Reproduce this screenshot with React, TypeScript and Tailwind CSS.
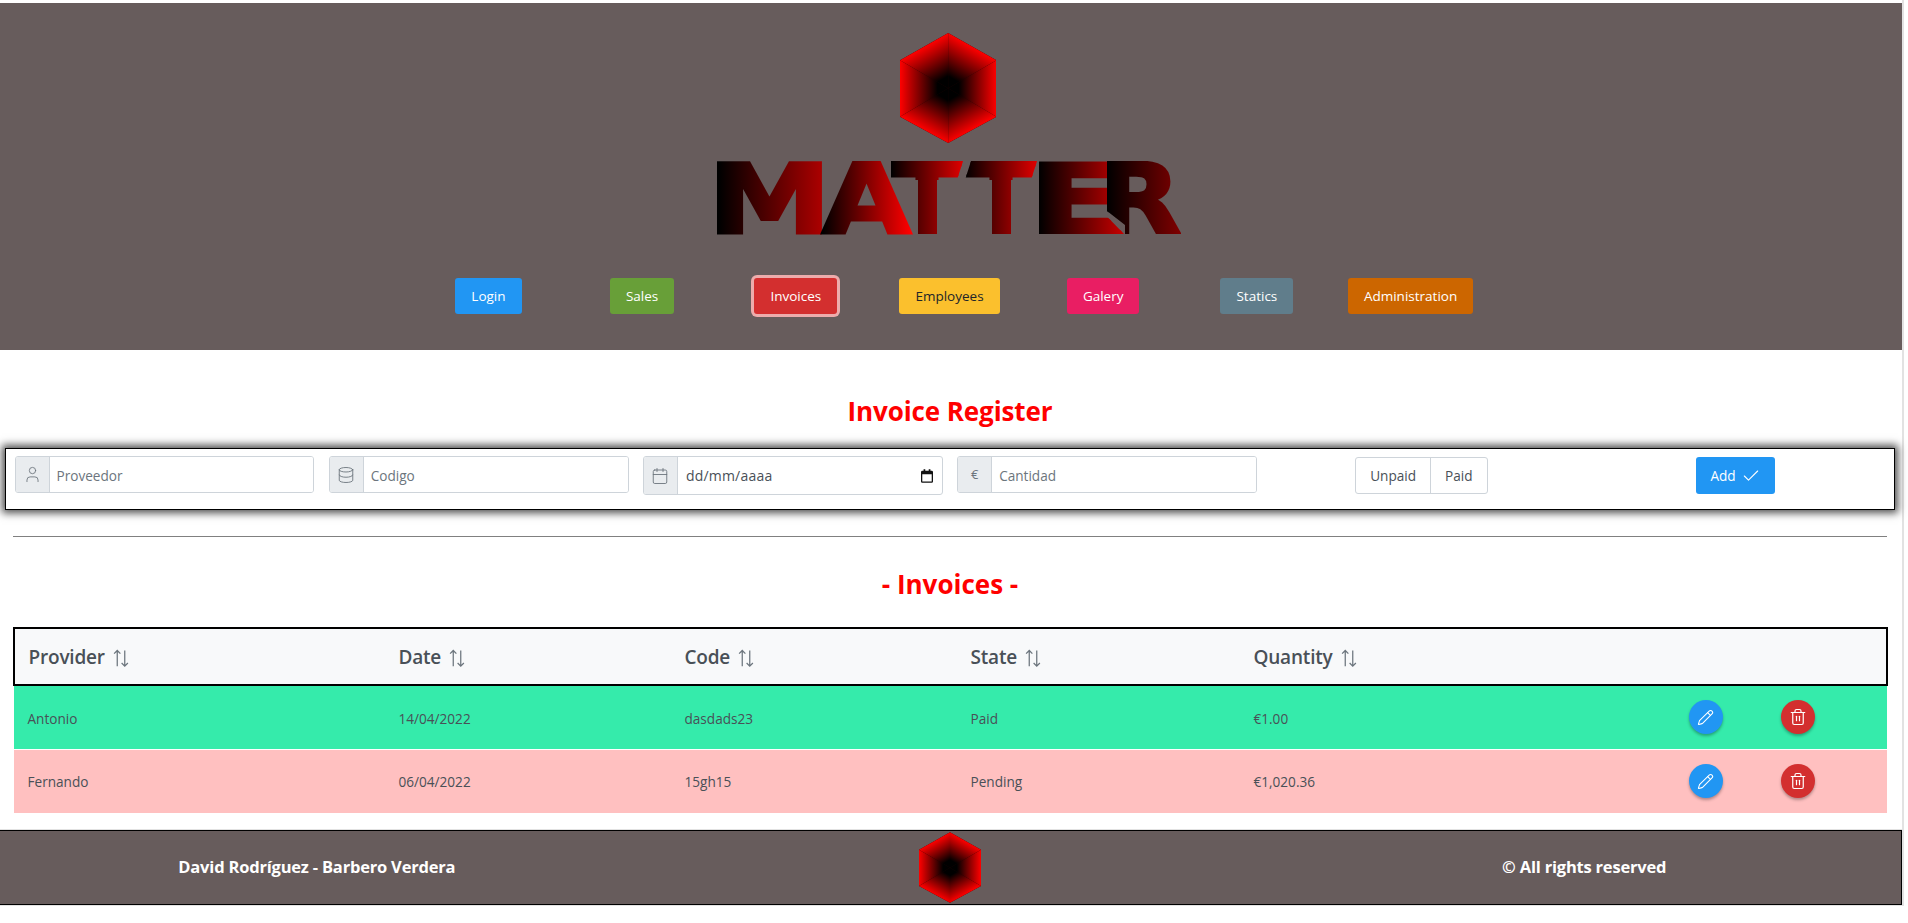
import React from "react";
import { Check, Database, Pencil, Trash2, User, Calendar } from "lucide-react";

const hexFaces = [
  { id: "a", pts: "48.2,0 96.4,27.3 48.2,55.3", to: [72.3, 13.6] },
  { id: "b", pts: "96.4,27.3 96.4,83.7 48.2,55.3", to: [96.4, 55.3] },
  { id: "c", pts: "96.4,83.7 48.2,110 48.2,55.3", to: [72.3, 97] },
  { id: "d", pts: "48.2,110 0,83.7 48.2,55.3", to: [24.1, 97] },
  { id: "e", pts: "0,83.7 0,27.3 48.2,55.3", to: [0, 55.3] },
  { id: "f", pts: "0,27.3 48.2,0 48.2,55.3", to: [24.1, 13.6] },
];

function Hex({ prefix, className }: { prefix: string; className: string }) {
  return (
    <svg viewBox="0 0 96.4 110" className={className} aria-hidden="true">
      <defs>
        {hexFaces.map((f) => (
          <linearGradient key={f.id} id={prefix + f.id} gradientUnits="userSpaceOnUse" x1="48.2" y1="55.3" x2={f.to[0]} y2={f.to[1]}>
            <stop offset="0.22" stopColor="#000" />
            <stop offset="1" stopColor="#f00" />
          </linearGradient>
        ))}
      </defs>
      <polygon points="48.2,0 96.4,27.3 96.4,83.7 48.2,110 0,83.7 0,27.3" fill="#200" />
      {hexFaces.map((f) => (
        <polygon key={f.id} points={f.pts} fill={`url(#${prefix + f.id})`} />
      ))}
    </svg>
  );
}

const letters = [
  { ch: "M", x: -11.4, w: 124, gx: 0, gw: 101, end: "#a80000", clip: "" },
  { ch: "A", x: 103, w: 89, gx: 104, gw: 88, end: "#ff0000", clip: "" },
  { ch: "T", x: 172, w: 72, gx: 172, gw: 72, end: "#e00000", clip: "url(#t1)" },
  { ch: "T", x: 246, w: 72, gx: 246, gw: 72, end: "#e00000", clip: "url(#t2)" },
  { ch: "E", x: 305, w: 110, gx: 320, gw: 85, end: "#c80000", clip: "url(#ec)" },
  { ch: "R", x: 378, w: 84, gx: 388, gw: 74, end: "#800000", clip: "url(#rc)" },
];

function Wordmark() {
  return (
    <div className="flex w-[462px] h-[73px]">
      <svg viewBox="-30 -30 522 133" className="block shrink-0 w-[522px] h-[133px] -m-[30px]" role="img" aria-label="MATTER">
        <defs>
          {letters.map((l, i) => (
            <linearGradient key={i} id={"lg" + i} gradientUnits="userSpaceOnUse" x1={l.gx} y1="0" x2={l.gx + l.gw} y2="0">
              <stop offset="0" stopColor="#000" />
              <stop offset="1" stopColor={l.end} />
            </linearGradient>
          ))}
          <clipPath id="t1">
            <polygon points="172,0 244,0 238,19 218,19 218,73 199,73 199,19 172,19" />
          </clipPath>
          <clipPath id="t2">
            <polygon points="252,0 318,0 312,19 292,19 292,73 273,73 273,19 246,19" />
          </clipPath>
          <clipPath id="ec">
            <polygon points="320,0 388,0 388,55.6 405,73 320,73" />
          </clipPath>
          <clipPath id="rc">
            <polygon points="388,0 462,0 462,73 406,73 406,64 388,50" />
          </clipPath>
        </defs>
        {letters.map((l, i) => (
          <text
            key={i}
            x={l.x}
            y="71.5"
            textLength={l.w}
            lengthAdjust="spacingAndGlyphs"
            clipPath={l.clip || undefined}
            fill={`url(#lg${i})`}
            stroke={`url(#lg${i})`}
            strokeWidth="3"
            style={{ fontFamily: '"DejaVu Sans", sans-serif', fontWeight: 700, fontSize: 96 }}
          >
            {l.ch}
          </text>
        ))}
      </svg>
    </div>
  );
}

function SortAlt() {
  return (
    <svg viewBox="0 0 16 16" className="w-[20px] h-[20px] text-[#6c757d]" fill="none" stroke="currentColor" strokeWidth="1" aria-hidden="true">
      <path d="M5 14.5V2M2.5 4.5 5 2l2.5 2.5M11 2v12.5M8.5 12 11 14.5l2.5-2.5" />
    </svg>
  );
}

const navs = [
  { t: "Login", c: "bg-[#2196f3] text-white" },
  { t: "Sales", c: "bg-[#689f38] text-white" },
  { t: "Invoices", c: "bg-[#d32f2f] text-white ring-[3px] ring-[#edacac]" },
  { t: "Employees", c: "bg-[#fbc02d] text-[#212529]" },
  { t: "Galery", c: "bg-[#e91e63] text-white" },
  { t: "Statics", c: "bg-[#607d8b] text-white" },
  { t: "Administration", c: "bg-[#cc6600] text-white" },
];

function Addon({ children }: { children: React.ReactNode }) {
  return (
    <span className="w-[34px] shrink-0 flex items-center justify-center bg-[#e9ecef] border-r border-[#ced4da] text-[#6c757d]">
      {children}
    </span>
  );
}

function Field({ icon, placeholder }: { icon: React.ReactNode; placeholder: string }) {
  return (
    <div className="flex h-[37px] border border-[#ced4da] rounded-[3px] overflow-hidden">
      <Addon>{icon}</Addon>
      <input
        placeholder={placeholder}
        className="flex-1 min-w-0 px-[7px] pt-[3px] text-[13.6px] text-[#495057] placeholder:text-[#6c757d] outline-none bg-white"
      />
    </div>
  );
}

const rows = [
  { p: "Antonio", d: "14/04/2022", c: "dasdads23", s: "Paid", q: "€1.00", bg: "bg-[#35ebab]" },
  { p: "Fernando", d: "06/04/2022", c: "15gh15", s: "Pending", q: "€1,020.36", bg: "bg-[#ffc0c0]" },
];
const heads = ["Provider", "Date", "Code", "State", "Quantity"];

export default function App() {
  return (
    <div className="h-[923px] bg-white text-[#495057] overflow-hidden font-['Open_Sans','Noto_Sans',sans-serif] text-[13.6px]">
      <div className="w-[1904px] h-[906px] pt-[3px] border-r-[2px] border-[#e2e2e2]">
        <header className="w-[1902px] bg-[#675c5c] flex flex-col items-center pt-[30px] pr-[3px] h-[347px]">
          <Hex prefix="h" className="block w-[96.4px] h-[110px] mr-[3.6px]" />
          <div className="mt-[18px] ml-[1px]"><Wordmark /></div>
          <nav className="mt-[44px] grid grid-cols-[repeat(7,153.7px)] justify-center justify-items-center">
            {navs.map((n) => (
              <button key={n.t} className={`h-[36px] px-[16px] rounded-[3px] text-[13.5px] ${n.c}`}>
                {n.t}
              </button>
            ))}
          </nav>
        </header>

        <main className="w-[1900px] px-[5px]">
          <h1 className="mt-[43px] text-center text-[#ff0000] text-[26px] leading-[36px] font-bold tracking-[-0.1px]">Invoice Register</h1>

          <section className="mt-[19px] h-[62px] w-[1890px] border border-black bg-white shadow-[0_0_8px_3px_rgba(0,0,0,0.7)] grid grid-cols-6 gap-x-[14.3px] items-start px-[8.5px] pt-[7px]">
            <Field icon={<User size={19} strokeWidth={1.1} />} placeholder="Proveedor" />
            <Field icon={<Database size={18} strokeWidth={1.2} />} placeholder="Codigo" />
            <div className="flex h-[39px] border border-[#ced4da] rounded-[3px] overflow-hidden">
              <Addon><Calendar size={18} strokeWidth={1.2} /></Addon>
              <div className="flex-1 flex items-center justify-between pl-[8px] pr-[9px] text-[14px] tracking-[0.2px] text-[#495057]">
                <span>dd/mm/aaaa</span>
                <svg viewBox="0 0 14 16" className="w-[12px] h-[14px]" aria-hidden="true">
                  <path d="M3 0h2v2h4V0h2v2h1.5A1.5 1.5 0 0 1 14 3.5v11a1.5 1.5 0 0 1-1.5 1.5h-11A1.5 1.5 0 0 1 0 14.5v-11A1.5 1.5 0 0 1 1.5 2H3zM1.5 6v8.5h11V6z" fill="#111" />
                </svg>
              </div>
            </div>
            <Field icon={<span className="text-[13px]">€</span>} placeholder="Cantidad" />
            <div className="justify-self-center flex h-[37px] mt-[1px] border border-[#ced4da] rounded-[3px] bg-white text-[13.6px]">
              <span className="px-[14px] pt-[2px] flex items-center border-r border-[#ced4da]">Unpaid</span>
              <span className="px-[14px] pt-[2px] flex items-center">Paid</span>
            </div>
            <button className="justify-self-center h-[37px] w-[79px] mt-[1px] rounded-[3px] bg-[#2196f3] text-white flex items-center justify-center gap-[5px] pt-[1px] text-[13.6px]">
              Add <Check size={20} strokeWidth={1.3} />
            </button>
          </section>

          <hr className="mt-[26px] ml-[8px] w-[1874px] border-0 border-t border-[#808080]" />
          <h2 className="mt-[29px] text-center text-[#ff0000] text-[26px] leading-[36px] font-bold">- Invoices -</h2>

          <table className="mt-[25px] ml-[7.5px] w-[1875px] table-fixed border-collapse">
            <colgroup>
              <col className="w-[371px]" />
              <col className="w-[286px]" />
              <col className="w-[286px]" />
              <col className="w-[283px]" />
              <col className="w-[422px]" />
              <col />
            </colgroup>
            <thead>
              <tr className="h-[57px] bg-[#f8f9fa] border-[2px] border-black">
                {heads.map((h) => (
                  <th key={h} className="text-left pl-[14px] pt-[2px] font-semibold text-[19px] tracking-[-0.2px]">
                    <span className="inline-flex items-center gap-[6px]">{h} <SortAlt /></span>
                  </th>
                ))}
                <th />
              </tr>
            </thead>
            <tbody>
              {rows.map((r) => (
                <tr key={r.p} className={`h-[64px] ${r.bg} border-b border-white`}>
                  <td className="pl-[14px] pt-[3px]">{r.p}</td>
                  <td className="pl-[14px] pt-[3px]">{r.d}</td>
                  <td className="pl-[14px] pt-[3px]">{r.c}</td>
                  <td className="pl-[14px] pt-[3px]">{r.s}</td>
                  <td className="pl-[14px] pt-[3px]">{r.q}</td>
                  <td>
                    <div className="flex gap-[58px] pl-[27px]">
                      <button className="w-[34px] h-[34px] rounded-full bg-[#2196f3] text-white flex items-center justify-center shadow-[0_2px_3px_rgba(0,0,0,0.3)]">
                        <Pencil size={17} strokeWidth={1.5} />
                      </button>
                      <button className="w-[34px] h-[34px] rounded-full bg-[#d32f2f] text-white flex items-center justify-center shadow-[0_2px_3px_rgba(0,0,0,0.3)]">
                        <Trash2 size={18} strokeWidth={1.6} />
                      </button>
                    </div>
                  </td>
                </tr>
              ))}
            </tbody>
          </table>
        </main>

        <footer className="mt-[16px] w-[1902px] h-[75px] bg-[#675c5c] border-y border-r border-black shadow-[0_0_0_1px_#e2e2e2] grid grid-cols-3 items-center text-white font-bold text-[16.5px] tracking-[-0.2px]">
          <div className="text-center">David Rodríguez - Barbero Verdera</div>
          <div className="flex justify-center"><Hex prefix="g" className="block w-[62px] h-[71px]" /></div>
          <div className="text-center">© All rights reserved</div>
        </footer>
      </div>
    </div>
  );
}
